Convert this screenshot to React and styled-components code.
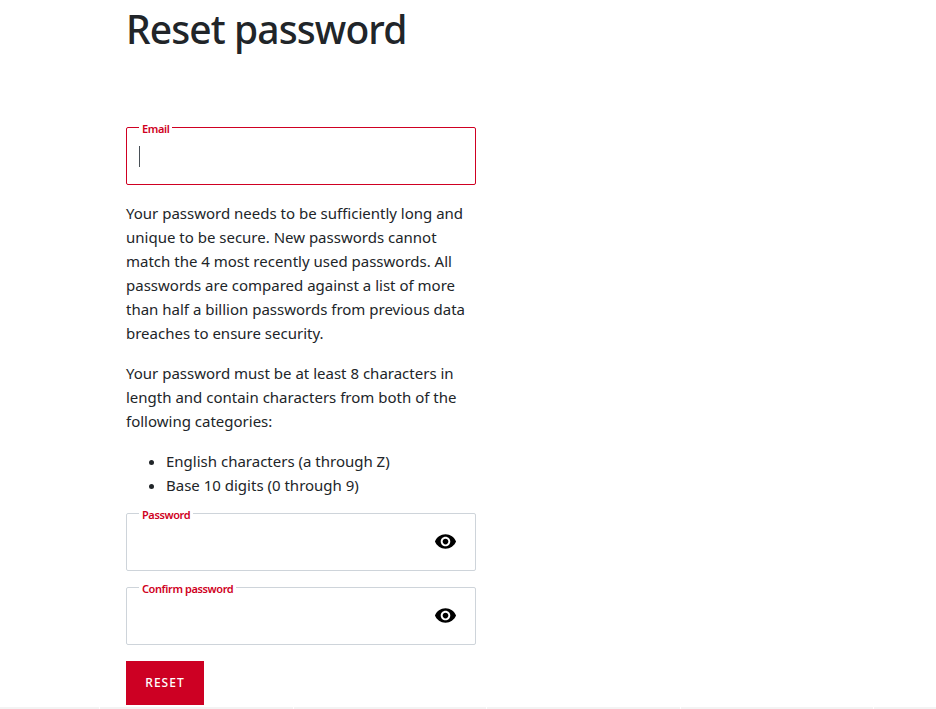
import React from 'react'
import styled, { createGlobalStyle } from 'styled-components'

const Global = createGlobalStyle`
  html, body {
    margin: 0;
    padding: 0;
    background: #fff;
  }
  body {
    font-family: "Noto Sans", "Open Sans", sans-serif;
    color: #212529;
  }
`

const Page = styled.div`
  height: 709px;
  overflow: hidden;
  display: flex;
  flex-direction: column;
`

const Main = styled.main`
  flex: 1;
  width: 350px;
  margin-left: 126px;
`

const Title = styled.h1`
  margin: 0 0 66px;
  padding-top: 5px;
  font-size: 39px;
  line-height: 48px;
  font-weight: 500;
  letter-spacing: -0.9px;
  color: #212529;
`

const Field = styled.fieldset`
  margin: 0 0 ${p => p.$gap}px;
  padding: 0 12px 8px;
  height: 66px;
  box-sizing: border-box;
  display: flex;
  align-items: center;
  justify-content: space-between;
  border-width: 1px;
  border-style: solid;
  border-color: ${p => (p.$active ? '#cf0022' : '#ced4da')};
  border-radius: 2px;
`

const Label = styled.legend`
  margin-left: 0;
  padding: 2px 3px 0;
  font-size: 11px;
  line-height: 15px;
  font-weight: 600;
  letter-spacing: -0.4px;
  color: #cf0022;
`

const Caret = styled.span`
  display: block;
  width: 1px;
  height: 21px;
  background: #495057;
`

const Eye = styled.svg`
  display: block;
  width: 23px;
  height: 23px;
  margin: 0 6px 1px auto;
  fill: #000;
`

const Text = styled.p`
  margin: 0 0 16px;
  font-size: 15px;
  line-height: 24px;
`

const List = styled.ul`
  margin: 0 0 8px;
  padding-left: 40px;
  font-size: 15px;
  line-height: 24px;
`

const Submit = styled.button`
  display: block;
  width: 78px;
  height: 44px;
  padding: 0 0 1px;
  border: 0;
  background: #cd0023;
  color: #fff;
  font-family: inherit;
  font-size: 12px;
  font-weight: 500;
  letter-spacing: 1px;
`

const Strip = styled.div`
  display: grid;
  grid-template-columns: 99px repeat(4, 192.5px) 1fr;
  column-gap: 1px;
  height: 2px;
`

const StripCell = styled.span`
  background: #f3f3f3;
`

function EyeIcon() {
  return (
    <Eye viewBox="0 0 24 24">
      <path d="M12 4.5C7 4.5 2.73 7.61 1 12c1.73 4.39 6 7.5 11 7.5s9.27-3.11 11-7.5c-1.73-4.39-6-7.5-11-7.5zM12 17c-2.76 0-5-2.24-5-5s2.24-5 5-5 5 2.24 5 5-2.24 5-5 5zm0-8c-1.66 0-3 1.34-3 3s1.34 3 3 3 3-1.34 3-3-1.34-3-3-3z" />
    </Eye>
  )
}

export default function App() {
  return (
    <>
      <Global />
      <Page>
        <Main>
          <Title>Reset password</Title>
          <Field $active $gap={16}>
            <Label>Email</Label>
            <Caret />
          </Field>
          <Text>
            Your password needs to be sufficiently long and unique to be secure.
            New passwords cannot match the 4 most recently used passwords. All
            passwords are compared against a list of more than half a billion
            passwords from previous data breaches to ensure security.
          </Text>
          <Text>
            Your password must be at least 8 characters in length and contain
            characters from both of the following categories:
          </Text>
          <List>
            <li>English characters (a through Z)</li>
            <li>Base 10 digits (0 through 9)</li>
          </List>
          <Field $gap={8}>
            <Label>Password</Label>
            <EyeIcon />
          </Field>
          <Field $gap={16}>
            <Label>Confirm password</Label>
            <EyeIcon />
          </Field>
          <Submit>RESET</Submit>
        </Main>
        <Strip>
          {[0, 1, 2, 3, 4, 5].map(i => (
            <StripCell key={i} />
          ))}
        </Strip>
      </Page>
    </>
  )
}
